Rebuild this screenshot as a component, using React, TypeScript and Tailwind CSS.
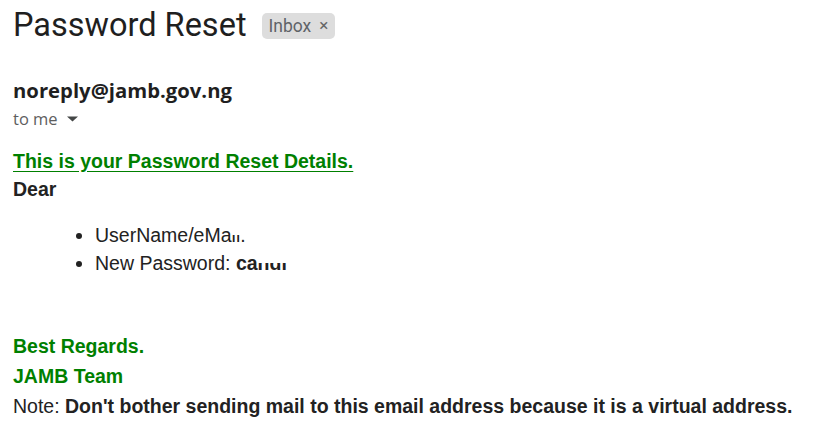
import React from "react";

function CaretDown() {
  return (
    <svg className="ml-[9px] h-[10px] w-[11px]" viewBox="0 0 11 10" aria-hidden="true">
      <path d="M0 2.5 L11 2.5 L5.5 7.5 Z" fill="#444746" />
    </svg>
  );
}

/* text whose upper part was blanked out in the original mail */
function Clipped({ children }: { children: React.ReactNode }) {
  return (
    <span className="relative">
      {children}
      <span className="absolute inset-x-0 top-0 h-[50%] bg-white" />
    </span>
  );
}

export default function App() {
  return (
    <main className="min-h-screen w-[834px] bg-white pl-[13px] text-[#222]">
      {/* subject */}
      <div className="flex items-center pt-[5px]">
        <h1 className="font-['Roboto',sans-serif] text-[32.5px] leading-[40px] text-[#1f1f1f]">
          Password Reset
        </h1>
        <span className="ml-[15px] mt-[2px] flex h-[26px] items-center rounded-[5px] bg-[#dddddd] px-[7px] font-['Roboto',sans-serif] text-[17.5px] text-[#5f6368]">
          Inbox
          <span className="ml-[8px] text-[17px] text-[#666]">×</span>
        </span>
      </div>

      {/* sender */}
      <div className="mt-[33px] font-['Open_Sans',sans-serif] text-[20.3px] font-bold leading-[24px] text-[#1f1f1f]">
        noreply@jamb.gov.ng
      </div>
      <div className="mt-[7px] flex items-center font-['Open_Sans',sans-serif] text-[16.5px] leading-[20px] text-[#5e5e5e]">
        to me
        <CaretDown />
      </div>

      {/* body */}
      <div className="mt-[18px] font-['Liberation_Sans',Arial,sans-serif] text-[19.5px] leading-[28px]">
        <div className="font-bold text-[#008000] underline underline-offset-[3px]">
          This is your Password Reset Details.
        </div>
        <div className="font-bold text-[#222]">Dear</div>

        <ul className="mt-[18px] list-disc pl-[82px] text-[#222]">
          <li>
            UserName/eMa<Clipped>il.</Clipped>
          </li>
          <li>
            New Password: <b>ca<Clipped>ndi</Clipped></b>
          </li>
        </ul>

        <div className="mt-[55px] font-bold text-[#008000]">Best Regards.</div>
        <div className="mt-[2px] font-bold text-[#008000]">JAMB Team</div>
        <div className="mt-[2px] text-[#222]">
          Note: <b>Don't bother sending mail to this email address because it is a virtual address.</b>
        </div>
      </div>
    </main>
  );
}
